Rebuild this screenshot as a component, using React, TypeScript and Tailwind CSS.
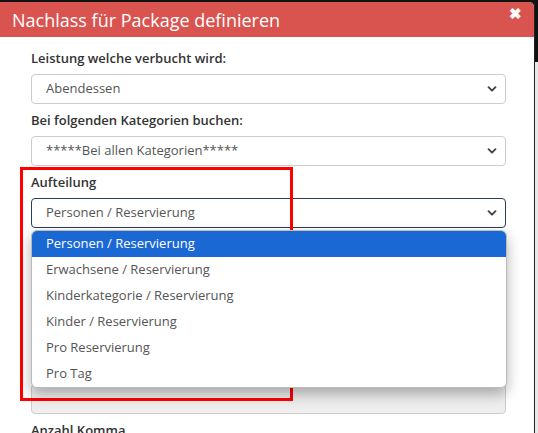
import { ReactNode } from 'react'

const font = { fontFamily: '"Open Sans", "Liberation Sans", sans-serif' }

function Chevron() {
  return (
    <svg viewBox="0 0 10 10" className="h-[10px] w-[10px]" aria-hidden>
      <path
        d="M1.5 3.2 L5 6.7 L8.5 3.2"
        fill="none"
        stroke="#444"
        strokeWidth="1.9"
        strokeLinecap="round"
        strokeLinejoin="round"
      />
    </svg>
  )
}

function Label({ children }: { children?: ReactNode }) {
  return (
    <div className="mb-[7px] h-[18px] text-[13px] font-semibold leading-[18px] text-[#333]">
      {children}
    </div>
  )
}

function FakeSelect({
  value,
  focused,
  children,
}: {
  value: string
  focused?: boolean
  children?: ReactNode
}) {
  return (
    <div className="relative mb-[7px]">
      <div
        className={
          'flex h-[30px] items-center justify-between rounded-[4px] border bg-white pl-[14px] pr-[8px] text-[13px] text-[#555] ' +
          (focused ? 'border-[#2f3d4e]' : 'border-[#ccc]')
        }
      >
        <span>{value}</span>
        <Chevron />
      </div>
      {children}
    </div>
  )
}

const options = [
  'Personen / Reservierung',
  'Erwachsene / Reservierung',
  'Kinderkategorie / Reservierung',
  'Kinder / Reservierung',
  'Pro Reservierung',
  'Pro Tag',
]

export default function App() {
  return (
    <div className="h-[433px] w-[538px] overflow-hidden bg-[#111] pt-[2px]" style={font}>
      <div className="flex h-full">
        <div className="relative h-full w-[534px] overflow-hidden rounded-tr-[5px] bg-white">
          <div className="flex h-[35px] items-center justify-between bg-[#d9534f] pl-[12px] pr-[12px]">
            <span className="text-[18px] leading-none text-white">
              Nachlass für Package definieren
            </span>
            <span className="-mt-[12px] text-[15px] font-bold leading-none text-white">✖</span>
          </div>

          <div className="pl-[31px] pr-[28px] pt-[12px]">
            <Label>Leistung welche verbucht wird:</Label>
            <FakeSelect value="Abendessen" />

            <Label>Bei folgenden Kategorien buchen:</Label>
            <FakeSelect value="*****Bei allen Kategorien*****" />

            <Label>Aufteilung</Label>
            <FakeSelect value="Personen / Reservierung" focused>
              <div className="absolute left-0 right-[-1px] top-[32px] z-10 overflow-hidden rounded-[6px] border border-[#bbb] bg-white shadow-[0_6px_14px_rgba(0,0,0,0.3)]">
                {options.map((o, i) => (
                  <div
                    key={o}
                    className={
                      'flex h-[26px] items-center pl-[14px] text-[13px] ' +
                      (i === 0 ? 'bg-[#1a68d4] text-white' : 'text-[#555]')
                    }
                  >
                    {o}
                  </div>
                ))}
              </div>
            </FakeSelect>

            {/* fields hidden behind the open list */}
            <Label />
            <FakeSelect value="" />
            <Label />
            <FakeSelect value="" />
            <Label />
            <div className="mb-[7px] h-[30px] rounded-[4px] border border-[#ccc] bg-[#eee]" />
            <Label>Anzahl Komma</Label>
          </div>

          <div className="pointer-events-none absolute left-[20px] top-[165px] h-[234px] w-[273px] border-[3px] border-[#ff0000]" />
        </div>
        <div className="w-[1px] bg-[#222]" />
        <div className="mt-[60px] flex-1 bg-[#e8e8e8]" />
      </div>
    </div>
  )
}
